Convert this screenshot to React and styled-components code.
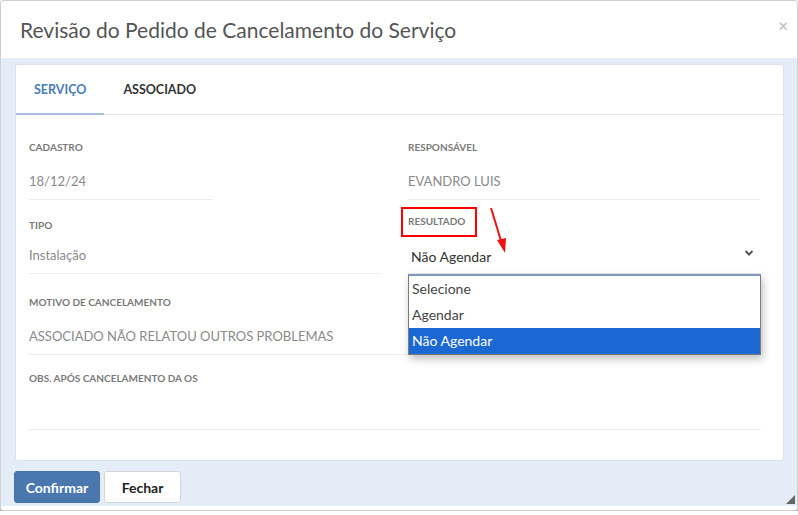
import React from "react";
import styled, { createGlobalStyle } from "styled-components";

const GlobalStyle = createGlobalStyle`
  html, body { margin: 0; padding: 0; background: #ffffff; }
  body { font-family: Lato, "Open Sans", "Noto Sans", sans-serif; }
  * { box-sizing: border-box; }
`;

const Dialog = styled.div`
  width: 798px;
  height: 511px;
  background: #ffffff;
  border: 1px solid #cfcfcf;
  border-radius: 3px;
  box-shadow: 0 4px 2px rgba(0, 0, 0, 0.45);
  display: flex;
  flex-direction: column;
`;

const Header = styled.div`
  height: 57px;
  flex: none;
  display: flex;
  align-items: center;
  justify-content: space-between;
  padding: 0 9px 0 19px;
`;

const Title = styled.h1`
  margin: 0;
  font-size: 21px;
  font-weight: 400;
  color: #555555;
`;

const Close = styled.span`
  font-size: 17px;
  font-weight: 700;
  color: #c4c4c4;
  line-height: 1;
  margin-top: -8px;
`;

const Body = styled.div`
  flex: 1;
  background: #e3ecf7;
  padding: 6px 13px 0 13px;
  display: flex;
  flex-direction: column;
  position: relative;
  margin-bottom: 4px;
`;

const Card = styled.div`
  height: 397px;
  margin-left: 1px;
  background: #ffffff;
  border: 1px solid #dbe2ea;
  border-radius: 3px;
  display: flex;
  flex-direction: column;
`;

const Tabs = styled.div`
  height: 50px;
  flex: none;
  display: flex;
  border-bottom: 1px solid #e7e7e7;
`;

const Tab = styled.div`
  display: flex;
  align-items: center;
  padding: 0 ${(p) => p.$pad}px;
  font-size: 12.5px;
  font-weight: 700;
  color: ${(p) => (p.$active ? "#4a7cb8" : "#333333")};
  border-bottom: 2px solid ${(p) => (p.$active ? "#a8bedb" : "transparent")};
  margin-bottom: -1px;
`;

const Form = styled.div`
  padding: 0 22px 0 13px;
  display: flex;
  flex-direction: column;
`;

const Row = styled.div`
  display: grid;
  grid-template-columns: 352px 352px;
  column-gap: 27px;
  align-items: start;
`;

const Field = styled.div`
  display: flex;
  flex-direction: column;
  padding-top: ${(p) => p.$top}px;
  gap: ${(p) => p.$gap}px;
  position: relative;
`;

const Label = styled.div`
  height: 14px;
  line-height: 14px;
  font-size: 10px;
  font-weight: 700;
  color: #7a7a7a;
  text-transform: uppercase;
`;

const Value = styled.div`
  height: ${(p) => p.$h || 36}px;
  width: ${(p) => (p.$w ? `${p.$w}px` : "auto")};
  line-height: 34px;
  font-size: 13px;
  color: #8a8a8a;
  border-bottom: 1px solid #ececec;
`;

const SelectBox = styled.div`
  height: 36px;
  display: flex;
  align-items: center;
  justify-content: space-between;
  padding: 1px 6px 0 3px;
  font-size: 14px;
  color: #333333;
  border-bottom: 1px solid #ececec;
  position: relative;
`;

const Chevron = styled.svg`
  width: 10px;
  height: 10px;
  margin-top: -6px;
`;

const Highlight = styled.div`
  position: absolute;
  left: -7px;
  top: 7px;
  width: 76px;
  height: 30px;
  border: 2px solid #ff0000;
`;

const Arrow = styled.svg`
  position: absolute;
  left: 80px;
  top: 6px;
  width: 24px;
  height: 50px;
  overflow: visible;
`;

const Dropdown = styled.ul`
  position: absolute;
  left: 0;
  top: 36px;
  width: 353px;
  margin: 0;
  padding: 0;
  list-style: none;
  background: #ffffff;
  border: 1px solid #7b7b7b;
  border-top: 2px solid #7f98b8;
  box-shadow: 2px 4px 8px rgba(0, 0, 0, 0.25);
  z-index: 2;
`;

const Option = styled.li`
  height: 26px;
  line-height: 26px;
  padding-left: 3px;
  font-size: 14px;
  color: ${(p) => (p.$selected ? "#ffffff" : "#444444")};
  background: ${(p) => (p.$selected ? "#1b68d3" : "#ffffff")};
`;

const Footer = styled.div`
  display: flex;
  gap: 4px;
  padding-top: 10px;
`;

const Button = styled.button`
  height: 32px;
  width: ${(p) => p.$w}px;
  padding: 0;
  font-family: inherit;
  font-size: 14px;
  font-weight: 700;
  border-radius: 3px;
  border: 1px solid ${(p) => (p.$primary ? "#4672a9" : "#d5d5d5")};
  background: ${(p) => (p.$primary ? "#4a77ae" : "#ffffff")};
  color: ${(p) => (p.$primary ? "#ffffff" : "#222222")};
  cursor: pointer;
`;

const Grip = styled.svg`
  position: absolute;
  right: 2px;
  bottom: 2px;
  width: 9px;
  height: 9px;
`;

export default function App() {
  return (
    <>
      <GlobalStyle />
      <Dialog>
        <Header>
          <Title>Revisão do Pedido de Cancelamento do Serviço</Title>
          <Close>×</Close>
        </Header>
        <Body>
          <Card>
            <Tabs>
              <Tab $active $pad={18}>SERVIÇO</Tab>
              <Tab $pad={19}>ASSOCIADO</Tab>
            </Tabs>
            <Form>
              <Row>
                <Field $top={25} $gap={10}>
                  <Label>Cadastro</Label>
                  <Value $w={184}>18/12/24</Value>
                </Field>
                <Field $top={25} $gap={10}>
                  <Label>Responsável</Label>
                  <Value>EVANDRO LUIS</Value>
                </Field>
              </Row>
              <Row>
                <Field $top={18} $gap={6}>
                  <Label>Tipo</Label>
                  <Value>Instalação</Value>
                </Field>
                <Field $top={14} $gap={10}>
                  <Label>Resultado</Label>
                  <Highlight />
                  <Arrow viewBox="0 0 24 50">
                    <line x1="3" y1="2" x2="14" y2="38" stroke="#ee1111" strokeWidth="2" />
                    <polygon points="9,34 18,32 17,47" fill="#ee1111" />
                  </Arrow>
                  <SelectBox>
                    <span>Não Agendar</span>
                    <Chevron viewBox="0 0 10 10">
                      <polyline points="1.5,3 5,6.5 8.5,3" fill="none" stroke="#555" strokeWidth="2" />
                    </Chevron>
                    <Dropdown>
                      <Option>Selecione</Option>
                      <Option>Agendar</Option>
                      <Option $selected>Não Agendar</Option>
                    </Dropdown>
                  </SelectBox>
                </Field>
              </Row>
              <Field $top={21} $gap={10}>
                <Label>Motivo de Cancelamento</Label>
                <Value>ASSOCIADO NÃO RELATOU OUTROS PROBLEMAS</Value>
              </Field>
              <Field $top={16} $gap={8}>
                <Label>Obs. após cancelamento da OS</Label>
                <Value $h={37} />
              </Field>
            </Form>
          </Card>
          <Footer>
            <Button $primary $w={86}>Confirmar</Button>
            <Button $w={77}>Fechar</Button>
          </Footer>
          <Grip viewBox="0 0 9 9">
            <polygon points="9,0 9,9 0,9" fill="#666" />
          </Grip>
        </Body>
      </Dialog>
    </>
  );
}
